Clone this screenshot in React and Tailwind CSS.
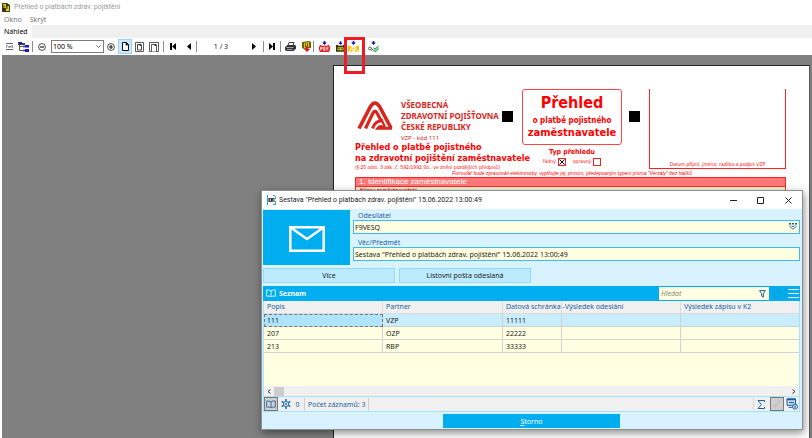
import React from 'react';

const Sep = () => <span className="h-[11px] w-px shrink-0 bg-[#8c8c8c]" />;

function Tool({ label, w, active, children }) {
  return (
    <button
      type="button"
      aria-label={label}
      className={`relative flex h-[15px] shrink-0 items-center justify-center ${w} ${active ? 'bg-[#cce8ff] outline outline-1 -outline-offset-1 outline-[#99d1ff]' : ''}`}
    >
      {children}
    </button>
  );
}

const DownArrow = () => (
  <path d="M6 0h2v2h2L7 5 4 2h2z" fill="#1010b0" />
);

function Toolbar() {
  return (
    <div className="flex h-[17px] items-center bg-white pl-[3px]">
      <Tool label="Zavřít" w="w-[12px]">
        <svg width="7" height="7" viewBox="0 0 7 7" fill="none" stroke="#555">
          <path d="M0 .5h7M0 6.500h7" strokeWidth=".9" />
          <path d="M.5 2v3M6.500 2v3" strokeWidth=".6" />
          <path d="M1.500 2.500l1.500 2 1-1.500 1.500 1.500M5.500 2.500L4 4.500" strokeWidth=".8" />
        </svg>
      </Tool>
      <Tool label="Osnova" w="w-[17px]">
        <svg width="11" height="10" viewBox="0 0 11 10">
          <path d="M1.500 2v6.500h5M1.500 4.500h6" stroke="#555" fill="none" />
          <path d="M0 0h4v3H0zM4 1h3v2H4z" fill="#444" />
          <path d="M7 3h4v2.500H7zM7 7h4v3H7zM1 0h3v2H1z" fill="#1818c0" />
          <path d="M5 3.500h2v2H5zM5 7.500h2v2H5z" fill="#666" />
        </svg>
      </Tool>
      <Sep />
      <Tool label="Zmenšit" w="w-[18px]">
        <svg width="8" height="8" viewBox="0 0 8 8" fill="none" stroke="#222">
          <circle cx="4" cy="4" r="3.400" strokeWidth=".8" />
          <path d="M2 4h4" strokeWidth="1.200" />
        </svg>
      </Tool>
      <span className="relative flex h-[13px] w-[53px] shrink-0">
        <select
          aria-label="Měřítko"
          className="h-full w-full appearance-none rounded-none border border-[#7a7a7a] bg-white pl-px text-[7px] leading-[11px] text-black"
        >
          <option>100 %</option>
        </select>
        <svg className="pointer-events-none absolute right-[3px] top-[5px]" width="5" height="3" viewBox="0 0 5 3" fill="none" stroke="#444">
          <path d="M.3 .3l2.200 2.200L4.700 .3" strokeWidth=".8" />
        </svg>
      </span>
      <Tool label="Zvětšit" w="w-[14px]">
        <svg width="8" height="8" viewBox="0 0 8 8" fill="none" stroke="#222">
          <circle cx="4" cy="4" r="3.400" strokeWidth=".8" />
          <path d="M2 4h4M4 2v4" strokeWidth="1.200" />
        </svg>
      </Tool>
      <Tool label="Skutečná velikost" w="w-[14px]" active>
        <svg width="7" height="9" viewBox="0 0 7 9" fill="#fff" stroke="#111">
          <path d="M.5 .5h4l2 2v6h-6z" />
          <path d="M4 .5v2.500h2.500" fill="#222" strokeWidth=".8" />
        </svg>
      </Tool>
      <Tool label="Celá stránka" w="w-[15px]">
        <svg width="9" height="10" viewBox="0 0 9 10" fill="#fff" stroke="#333">
          <path d="M.5 .5h8v9h-8z" strokeWidth=".8" />
          <path d="M2.500 2.500h2.500l1.500 1.500v4h-4z" strokeWidth=".9" />
          <path d="M4.500 2h2v2h-2z" fill="#333" stroke="none" />
        </svg>
      </Tool>
      <Tool label="Šířka stránky" w="w-[14px]">
        <svg width="10" height="10" viewBox="0 0 10 10" fill="#fff" stroke="#333">
          <path d="M.5 .5h9v9h-9z" strokeWidth=".8" />
          <path d="M2.500 9.500v-7h3.500l1.500 1.500v5.500" strokeWidth=".8" />
          <path d="M5.500 2h2v2h-2z" fill="#333" stroke="none" />
        </svg>
      </Tool>
      <span className="w-[2px] shrink-0" />
      <Sep />
      <Tool label="První strana" w="w-[18px]">
        <svg width="6" height="7" viewBox="0 0 6 7"><path d="M0 0h2v7H0zM6 0v7L2 3.500z" /></svg>
      </Tool>
      <Tool label="Předchozí strana" w="w-[14px]">
        <svg width="4" height="7" viewBox="0 0 4 7"><path d="M4 0v7L0 3.500z" /></svg>
      </Tool>
      <Sep />
      <span className="w-[48px] shrink-0 text-center text-[7px] leading-[10px]">1 / 3</span>
      <Tool label="Další strana" w="w-[18px]">
        <svg width="4" height="7" viewBox="0 0 4 7"><path d="M0 0v7l4-3.500z" /></svg>
      </Tool>
      <Sep />
      <Tool label="Poslední strana" w="w-[16px]">
        <svg width="6" height="7" viewBox="0 0 6 7"><path d="M4 0h2v7H4zM0 0v7l4-3.500z" /></svg>
      </Tool>
      <Sep />
      <Tool label="Tisk" w="w-[18px]">
        <svg width="11" height="9" viewBox="0 0 11 9">
          <path d="M3 3.500L4 .5h5L8 3.500" fill="#fff" stroke="#222" strokeWidth=".9" />
          <path d="M0 5l2.500-2H10l1 1v2.500L8.500 9H1.500L0 8z" fill="#333" />
          <path d="M1 5.500h7.500M2 7.500h5.500" stroke="#ccc" strokeWidth=".7" />
        </svg>
      </Tool>
      <Tool label="Export" w="w-[14px]">
        <svg width="9" height="11" viewBox="0 0 9 11">
          <path d="M0 1l7-1 2 1v6L2 8 0 7z" fill="#6d6400" />
          <path d="M2 2l5-1v5L2 7z" fill="#d9cc10" />
          <path d="M3.500 2v4M5.500 2v4" stroke="#333" strokeWidth=".7" />
          <path d="M4 5h2v3h2L5 11 2 8h2z" fill="#e01818" />
        </svg>
      </Tool>
      <Sep />
      <Tool label="Uložit do PDF" w="w-[20px]">
        <svg width="11" height="11" viewBox="0 0 14 14">
          <path d="M1 5h12v9H1zM0 7h14v5H0z" fill="#e62020" />
          <path d="M2 12V8h2v2H2M6 8v4h1.500V8zM10 12V8h2M10 10h2" stroke="#fff" fill="none" />
          <path d="M3 4h8v2H3z" fill="#fff" />
          <DownArrow />
        </svg>
      </Tool>
      <Tool label="Uložit do ZIP" w="w-[12px]">
        <svg width="9" height="11" viewBox="1 0 12 14">
          <path d="M1 5h12v9H1z" fill="#33300a" />
          <path d="M3 8h8v4H3z" fill="#d8cc28" />
          <path d="M4 10h2M8 10h2" stroke="#222" strokeWidth="1.500" />
          <path d="M4 4h6v2H4z" fill="#fff" />
          <DownArrow />
        </svg>
      </Tool>
      <Tool label="Odeslat poštou" w="w-[15px]">
        <svg width="11" height="11" viewBox="0 0 14 14">
          <path d="M0 6h3l4 3.500L11 6h3v8H0z" fill="#ffc010" />
          <path d="M3.500 8.500L7 12l3.500-3.500M4 11l-3 3M10 11l3 3M5 14l2-1 2 1z" stroke="#fff" strokeWidth="1.300" fill="none" />
          <DownArrow />
        </svg>
        <span className="pointer-events-none absolute -left-[2px] -top-[2px] h-[37px] w-[21px] border-[3px] border-[#ee1c24]" />
      </Tool>
      <Tool label="Podepsat" w="w-[24px]">
        <svg width="11" height="11" viewBox="0 0 14 14" fill="none">
          <circle cx="2.500" cy="9.500" r="1.800" stroke="#555" strokeWidth="1.200" />
          <path d="M4 9l3 3M4 12l2-1" stroke="#555" strokeWidth="1.200" />
          <path d="M7 8.500l2 2 4.500-4M7 11.500l2 2 4.500-4" stroke="#2ba052" strokeWidth="1.400" />
          <DownArrow />
        </svg>
      </Tool>
    </div>
  );
}

function InsuranceLogo() {
  return (
    <svg className="mt-[12px]" width="36" height="29" viewBox="0 0 36 29" fill="none" stroke="#d8261c">
      <path d="M2 27.500L13.500 5.500Q18-1.500 22.500 5.500L34 27" strokeWidth="3.600" />
      <path d="M8.500 27.500L16 12Q18 8 20 12L23.500 18.500" strokeWidth="3.200" />
      <path d="M15.500 27.500Q18 19.500 26 19.500" strokeWidth="2.800" />
      <path d="M18 28.800Q21 23.500 24.500 24L28 26h7v2.800z" fill="#d8261c" stroke="none" />
      <path d="M24 18l4 8" strokeWidth="2.400" />
    </svg>
  );
}

function FormPage() {
  return (
    <section className="ml-[331px] mr-[2px] mt-[10px] min-h-0 flex-1 overflow-hidden border-l border-r border-t border-[#222] border-r-[#555] bg-white pl-[21px] pr-[23px] pt-[23px] font-['DejaVu_Sans_Condensed','DejaVu_Sans',sans-serif] text-[#ff0000]">
      <div className="flex items-start">
        <div className="w-[167px] shrink-0 whitespace-nowrap">
          <div className="flex h-[53px] pl-[2px]">
            <InsuranceLogo />
            <div className="w-[101px] pl-[8px] pt-[10px] font-['Noto_Sans',sans-serif] text-[#d8261c]">
              <p className="text-[8px] font-bold leading-[11px]">VŠEOBECNÁ<br />ZDRAVOTNÍ POJIŠŤOVNA<br />ČESKÉ REPUBLIKY</p>
              <p className="pt-[2px] text-[6px] leading-[9px]">VZP - kód 111</p>
            </div>
            <span className="ml-[8px] mt-[22px] h-[11px] w-[11px] shrink-0 bg-black" />
          </div>
          <h2 className="text-[9px] font-bold leading-[11px]">Přehled o platbě pojistného<br />na zdravotní pojištění zaměstnavatele</h2>
          <p className="text-[5px] leading-[6px]">(§ 25 odst. 3 zák. č. 592/1992 Sb., ve znění pozdějších předpisů)</p>
        </div>
        <div className="w-[100px] shrink-0 whitespace-nowrap text-center">
          <div className="flex h-[56px] flex-col items-center rounded-[3px] border border-[#f44] pt-[3px] font-bold">
            <span className="text-[16px] leading-[20px]">Přehled</span>
            <span className="text-[8px] leading-[15px]">o platbě pojistného</span>
            <span className="text-[11px] leading-[10px]">zaměstnavatele</span>
          </div>
          <p className="pt-[3px] text-[7px] font-bold leading-[9px]">Typ přehledu</p>
          <div className="flex items-center justify-center gap-[2px] text-[5px] leading-[9px]">
            <label htmlFor="radny">řádný</label>
            <span className="relative flex">
              <input id="radny" type="checkbox" defaultChecked className="h-[8px] w-[8px] appearance-none border border-[#e22]" />
              <svg className="pointer-events-none absolute left-[1px] top-[1px]" width="6" height="6" viewBox="0 0 6 6" stroke="#111"><path d="M.5 .5l5 5M5.500 .5l-5 5" /></svg>
            </span>
            <label htmlFor="opravny" className="pl-[5px]">opravný</label>
            <input id="opravny" type="checkbox" className="h-[8px] w-[8px] appearance-none border border-[#e22]" />
          </div>
        </div>
        <span className="ml-[7px] mt-[22px] h-[11px] w-[11px] shrink-0 bg-black" />
        <div className="ml-[9px] flex h-[80px] flex-1 items-end justify-center border border-t-0 border-[#f22]">
          <span className="whitespace-nowrap pb-[1px] text-[5px] italic leading-[6px]">Datum přijetí, jméno, razítko a podpis VZP</span>
        </div>
      </div>
      <p className="whitespace-nowrap pl-[97px] font-['Liberation_Sans',sans-serif] text-[5px] italic leading-[7px]">Formulář bude zpracován elektronicky, vyplňujte jej, prosím, předepsaným typem písma "Verzály" bez háčků</p>
      <h3 className="border border-[#f22] bg-[#ff7878] pl-[3px] font-['Liberation_Sans',sans-serif] text-[8px] leading-[8px] text-white">1. Identifikace zaměstnavatele</h3>
      <div className="h-[200px] border-x border-[#f22] bg-[#f3f3d6] pl-[4px] text-[5px] font-bold leading-[6px]">Název zaměstnavatele</div>
    </section>
  );
}

function Field({ id, label, value, children }) {
  return (
    <div className="flex flex-col">
      <label htmlFor={id} className="pl-[5px] pt-[1px] text-[7px] leading-[9px] text-[#1c5f9e]">{label}</label>
      <span className="relative flex">
        <input id={id} defaultValue={value} className="h-[14px] w-full border border-[#3cbcec] bg-[#ffffe1] pl-px text-[7px] leading-[12px] text-[#222] outline-none" />
        {children}
      </span>
    </div>
  );
}

const rows = [
  ['111', 'VZP', '11111'],
  ['207', 'OZP', '22222'],
  ['213', 'RBP', '33333'],
];

const Book = ({ w, h, stroke }) => (
  <svg width={w} height={h} viewBox="0 0 12 10" fill="none" stroke={stroke}>
    <path d="M6 2v7M6 2Q5 .8 3 .8H.8V8.200H4Q5.500 8.200 6 9.200Q6.500 8.200 8 8.200h3.200V.8H9Q7 .8 6 2z" />
  </svg>
);

function MailDialog() {
  return (
    <div role="dialog" aria-label="Sestava" className="absolute left-[261px] right-[9px] top-[190px] flex flex-col border border-[#8a8f94] bg-[#d9f2ff] shadow-[1px_3px_8px_rgba(0,0,0,0.45)]">
      <header className="flex h-[18px] items-center bg-white pl-[5px]">
        <svg width="9" height="10" viewBox="0 0 9 10">
          <path d="M.5 0v10M6 .5h1.500L8.500 2v2M8.500 6v3.500H6" stroke="#19a5dc" fill="none" />
          <path d="M1.500 3h6v4h-6z" fill="#222" />
          <path d="M3 3.500v3M4.500 3.500l-1.500 1.500 1.500 1.500M5.500 4h1.200v1L5.500 6.300h1.500" stroke="#fff" strokeWidth=".6" fill="none" />
        </svg>
        <h1 className="flex-1 whitespace-nowrap pl-[3px] font-['Roboto',sans-serif] text-[7px] leading-[12px] text-[#222]">Sestava "Přehled o platbách zdrav. pojištění" 15.06.2022 13:00:49</h1>
        <button type="button" aria-label="Minimalizovat" className="flex h-[16px] w-[27px] items-center justify-center">
          <svg width="7" height="7" stroke="#222"><path d="M0 3.500h7" /></svg>
        </button>
        <button type="button" aria-label="Maximalizovat" className="flex h-[16px] w-[27px] items-center justify-center">
          <svg width="7" height="7" stroke="#222" fill="none"><path d="M.5 .5h6v6h-6z" /></svg>
        </button>
        <button type="button" aria-label="Zavřít okno" className="flex h-[16px] w-[28px] items-center justify-center">
          <svg width="7" height="7" stroke="#222"><path d="M.5 .5l6 6M6.500 .5l-6 6" /></svg>
        </button>
      </header>
      <div className="flex flex-col px-[1px] pb-[1px] pr-[2px]">
        <div className="flex gap-[3px] pt-[1px]">
          <div className="flex h-[55px] w-[87px] items-center justify-center bg-[#00adef]">
            <svg className="mt-[3px]" width="36" height="26" viewBox="0 0 36 26" fill="none" stroke="#fff" strokeWidth="2.500">
              <path d="M1.300 1.300h33.400v23.400H1.300zM1.300 1.300L18 13 34.700 1.300" />
            </svg>
          </div>
          <div className="flex-1">
            <Field id="odesilatel" label="Odesílatel" value="F9VESQ">
              <button type="button" aria-label="Vybrat odesílatele" className="absolute right-[3px] top-[3px] flex">
                <svg width="8" height="7" viewBox="0 0 8 7" fill="none" stroke="#1c5f9e">
                  <path d="M0 .8h2M3 .8h2M6 .8h2" strokeWidth="1.400" />
                  <path d="M.8 2.500v1L4 6.300l3.200-2.800v-1M2.500 2.500L4 4l1.500-1.500" strokeWidth=".9" />
                </svg>
              </button>
            </Field>
            <div className="pt-[3px]">
              <Field id="predmet" label="Věc/Předmět" value={'Sestava "Přehled o platbách zdrav. pojištění" 15.06.2022 13:00:49'} />
            </div>
          </div>
        </div>
        <div className="flex gap-[4px] pt-[3px] text-[7px] leading-[13px] text-[#222]">
          <button type="button" className="h-[15px] w-[132px] border border-[#8fdcf8] bg-[#bceaff]">Více</button>
          <button type="button" className="h-[15px] w-[132px] border border-[#8fdcf8] bg-[#bceaff]">Listovní pošta odeslaná</button>
        </div>
        <div className="mt-[3px] flex h-[15px] items-center bg-[#00adef] pl-[3px]">
          <Book w="10" h="9" stroke="#fff" />
          <h2 className="flex-1 pl-[3px] text-[7px] font-bold leading-[13px] text-white">Seznam</h2>
          <span className="relative flex">
            <input aria-label="Hledat" placeholder="Hledat" className="h-[13px] w-[110px] bg-[#ffffe1] pl-[2px] text-[7px] italic leading-[13px] outline-none placeholder:text-[#8a8a80]" />
            <svg className="pointer-events-none absolute right-[3px] top-[3px]" width="7" height="8" viewBox="0 0 7 8" fill="none" stroke="#1c5f9e"><path d="M.6 .6h5.800L4.300 3.800v3.400l-1.600-1V3.800z" /></svg>
          </span>
          <span className="flex w-[16px] justify-center">
            <svg width="7" height="9" viewBox="0 0 7 9" fill="none" stroke="#1a9bd3"><path d="M.5 3h6v5.500h-6zM2 3V1h3v2" /></svg>
          </span>
          <button type="button" aria-label="Nabídka" className="flex w-[15px] justify-center border-l border-[#1a9bd3]">
            <svg width="11" height="9" stroke="#e6f7ff"><path d="M0 .5h11M0 4.500h11M0 8.500h11" /></svg>
          </button>
        </div>
        <div className="h-[85px] border-x border-[#a8e2fa] bg-[#ffffe1]">
          <table className="w-full table-fixed border-separate border-spacing-0 text-left text-[7px] text-[#222]">
            <colgroup>
              <col className="w-[119px]" />
              <col className="w-[120px]" />
              <col className="w-[59px]" />
              <col className="w-[119px]" />
              <col />
            </colgroup>
            <thead>
              <tr className="bg-[#f0f0f0] text-[#1c5f9e]">
                {['Popis', 'Partner', 'Datová schránka -', 'Výsledek odeslání', 'Výsledek zápisu v K2'].map((h) => (
                  <th key={h} className="h-[13px] whitespace-nowrap border-b border-r border-[#dcdcdc] p-0 pl-[3px] font-normal leading-[12px] last:border-r-0">{h}</th>
                ))}
              </tr>
            </thead>
            <tbody>
              {rows.map((r, i) => (
                <tr key={r[0]} className={i === 0 ? 'bg-[#c9edfc]' : ''}>
                  {[...r, '', ''].map((c, j) => (
                    <td key={j} className={`h-[13px] border-b border-r border-[#d2d2d2] p-0 pl-[3px] pt-[2px] leading-[10px] last:border-r-0 ${i === 0 && j === 0 ? 'bg-[#aee5fc] outline-dashed outline-1 -outline-offset-1 outline-[#777]' : ''}`}>{c}</td>
                  ))}
                </tr>
              ))}
            </tbody>
          </table>
        </div>
        <div className="flex h-[10px] items-center border-x border-[#a8e2fa] bg-[#f0f0f0] px-[3px]">
          <svg width="4" height="5" fill="none" stroke="#333"><path d="M3.500 .5l-2.500 2 2.500 2" /></svg>
          <span className="ml-[3px] h-[9px] w-[10px] bg-[#cdcdcd]" />
          <span className="flex-1" />
          <svg width="4" height="5" fill="none" stroke="#333"><path d="M.5 .5l2.500 2-2.500 2" /></svg>
        </div>
        <div className="flex h-[16px] items-center border border-[#a8e2fa] bg-[#f0f0f0] text-[7px] leading-[13px] text-[#1c5f9e]">
          <button type="button" aria-label="Kniha" className="flex h-[14px] w-[14px] items-center justify-center border border-[#777] bg-[#cfcfcf]"><Book w="10" h="9" stroke="#1c5f9e" /></button>
          <svg className="ml-[3px]" width="10" height="10" viewBox="0 0 10 10" fill="none" stroke="#1c6fb4">
            <circle cx="5" cy="5" r="2.600" />
            <circle cx="5" cy="5" r=".7" />
            <path d="M5 0v2.200M5 7.800V10M.7 2.500l2 1.200M7.300 6.300l2 1.200M.7 7.500l2-1.200M7.300 3.700l2-1.200" strokeWidth="1.500" />
          </svg>
          <span className="w-[13px] text-center">0</span>
          <span className="border-x border-[#d0d0d0] px-[3px] whitespace-nowrap">Počet záznamů: 3</span>
          <span className="flex-1" />
          <button type="button" aria-label="Součet" className="mr-[2px] flex h-[12px] w-[15px] items-center justify-center border-l border-[#d8d8d8]">
            <svg width="8" height="9" fill="none" stroke="#1c5f9e"><path d="M7.500 2V.5H1L4.500 4.500 1 8.500h6.500V7" /></svg>
          </button>
          <button type="button" aria-label="Upravit" className="flex h-[14px] w-[14px] items-center justify-center border border-[#777] bg-[#cfcfcf]">
            <svg width="8" height="8" fill="none" stroke="#bbb"><path d="M1 7l.5-2L6 .8 7.300 2 3 6.500z" /></svg>
          </button>
          <button type="button" aria-label="Zobrazení" className="flex w-[15px] items-center justify-center">
            <svg width="12" height="12" viewBox="0 0 12 12" fill="none" stroke="#1c5f9e">
              <path d="M1 .8h8.500v6.500H1z" fill="#c5dcf2" />
              <path d="M1 1.500h8.500" strokeWidth="1.500" />
              <path d="M2.500 9.300h4M3 4.500h5" />
              <circle cx="9" cy="8.700" r="2.500" fill="#e6f2fc" />
              <circle cx="9" cy="8.700" r=".7" />
            </svg>
          </button>
        </div>
        <button type="button" className="mt-[2px] h-[14px] w-[177px] self-center bg-[#00adef] text-[7px] leading-[13px] text-white"><u>S</u>torno</button>
      </div>
    </div>
  );
}

export default function App() {
  return (
    <main className="relative flex h-screen flex-col overflow-hidden bg-white font-['Noto_Sans','Open_Sans',sans-serif] text-[#222]">
      <header className="flex h-[14px] items-center gap-[4px] pl-[2px] font-['Roboto',sans-serif] text-[7px] text-[#9a9a9a]">
        <svg width="8" height="10" viewBox="0 0 8 10">
          <path d="M0 1h5l3 2v7H0z" fill="#3c3a10" />
          <path d="M1 2h3v4H1zM5 4h2v5H4V7z" fill="#e0d020" />
          <path d="M2 3v5M5 3v4" stroke="#222" strokeWidth=".8" />
        </svg>
        <span>Přehled o platbách zdrav. pojištění</span>
      </header>
      <nav className="flex h-[11px] items-center gap-[8px] pl-[4px] text-[7px] leading-[11px] text-[#777]">
        <button type="button">Okno</button>
        <button type="button">Skrýt</button>
      </nav>
      <div role="tablist" className="flex h-[13px] bg-[#f0f0f0] text-[7px] leading-[13px]">
        <button type="button" role="tab" className="bg-white px-[4px] text-black">Náhled</button>
      </div>
      <Toolbar />
      <div className="ml-[2px] flex min-h-0 flex-1 flex-col bg-[#808080]">
        <FormPage />
      </div>
      <MailDialog />
    </main>
  );
}
